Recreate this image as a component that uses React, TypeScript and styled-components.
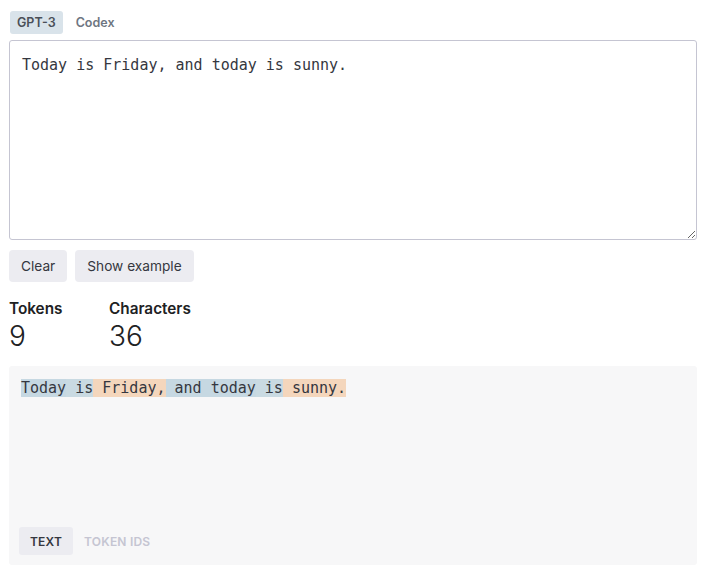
import React from "react";
import styled, { createGlobalStyle } from "styled-components";

const Global = createGlobalStyle`
  html, body { margin: 0; padding: 0; background: #fff; }
  body { font-family: Inter, "Noto Sans", sans-serif; color: #353740; }
`;

const Page = styled.div`
  padding: 11px 9px 0 9px;
  display: flex;
  flex-direction: column;
  width: 688px;
`;

const Tabs = styled.div`
  display: flex;
  gap: 6px;
  align-items: center;
  margin-bottom: 6px;
`;

const Tab = styled.button<{ $active?: boolean }>`
  border: 0;
  border-radius: 3px;
  height: 23px;
  padding: 0 7px;
  font-family: Inter, sans-serif;
  font-size: 12.5px;
  font-weight: 600;
  background: ${(p) => (p.$active ? "#d9e3ea" : "transparent")};
  color: ${(p) => (p.$active ? "#4a4f58" : "#6e7681")};
  margin-left: ${(p) => (p.$active ? "1px" : "0")};
`;

const Area = styled.textarea`
  box-sizing: border-box;
  width: 688px;
  height: 200px;
  border: 1px solid #c5c5d2;
  border-radius: 3px;
  padding: 13px 12px;
  font-family: "DejaVu Sans Mono", "Liberation Mono", monospace;
  font-size: 15px;
  line-height: 22px;
  color: #353740;
  resize: vertical;
  outline: none;
  margin: 0;
  display: block;
`;

const Buttons = styled.div`
  display: flex;
  gap: 8px;
  margin-top: 10px;
`;

const Btn = styled.button`
  border: 0;
  border-radius: 4px;
  height: 32px;
  padding: 0 12px;
  background: #ececf1;
  color: #353740;
  font-family: Inter, sans-serif;
  font-size: 13.7px;
`;

const Stats = styled.div`
  display: flex;
  margin-top: 17px;
`;

const Stat = styled.div`
  display: flex;
  flex-direction: column;
  width: 100px;
`;

const StatLabel = styled.div`
  font-size: 15.3px;
  font-weight: 600;
  color: #202123;
  line-height: 20px;
`;

const StatValue = styled.div`
  font-size: 28px;
  font-weight: 300;
  color: #202123;
  line-height: 34px;
`;

const Panel = styled.div`
  margin-top: 13px;
  background: #f7f7f8;
  border-radius: 3px;
  height: 199px;
  padding: 12px 12px 10px 10px;
  box-sizing: border-box;
  display: flex;
  flex-direction: column;
  justify-content: space-between;
`;

const TokenLine = styled.div`
  font-family: "DejaVu Sans Mono", "Liberation Mono", monospace;
  font-size: 15px;
  line-height: 20px;
  color: #353740;
  margin-left: 2px;
`;

const Tok = styled.span<{ $c: string }>`
  background: ${(p) => p.$c};
  white-space: pre;
  padding: 0;
  line-height: 18px;
  display: inline-block;
`;

const ModeTabs = styled.div`
  display: flex;
`;

const Mode = styled.button<{ $active?: boolean }>`
  border: 0;
  border-radius: 3px;
  height: 28px;
  padding: 0 11px;
  font-family: Inter, sans-serif;
  font-size: 12px;
  font-weight: 600;
  letter-spacing: 0.2px;
  background: ${(p) => (p.$active ? "#ececf1" : "transparent")};
  color: ${(p) => (p.$active ? "#353740" : "#c5c5d2")};
`;

const BLUE = "#c6d8e2";
const BLUE2 = "#c9dae2";
const ORANGE = "#f4d6bc";

const tokens: [string, string][] = [
  ["Today", BLUE],
  [" is", BLUE2],
  [" Friday", ORANGE],
  [",", ORANGE],
  [" and", BLUE],
  [" today", BLUE],
  [" is", BLUE2],
  [" sunny", ORANGE],
  [".", ORANGE],
];

export default function App() {
  return (
    <>
      <Global />
      <Page>
        <Tabs>
          <Tab $active>GPT-3</Tab>
          <Tab>Codex</Tab>
        </Tabs>
        <Area defaultValue="Today is Friday, and today is sunny." />
        <Buttons>
          <Btn>Clear</Btn>
          <Btn>Show example</Btn>
        </Buttons>
        <Stats>
          <Stat>
            <StatLabel>Tokens</StatLabel>
            <StatValue>9</StatValue>
          </Stat>
          <Stat>
            <StatLabel>Characters</StatLabel>
            <StatValue>36</StatValue>
          </Stat>
        </Stats>
        <Panel>
          <TokenLine>
            {tokens.map(([t, c], i) => (
              <Tok key={i} $c={c}>{t}</Tok>
            ))}
          </TokenLine>
          <ModeTabs>
            <Mode $active>TEXT</Mode>
            <Mode>TOKEN IDS</Mode>
          </ModeTabs>
        </Panel>
      </Page>
    </>
  );
}
